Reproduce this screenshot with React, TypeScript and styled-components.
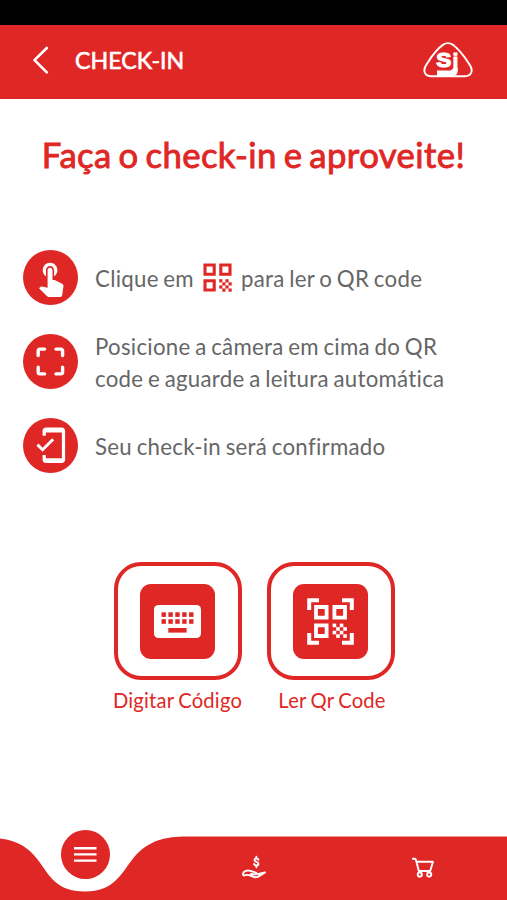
import React from "react";
import styled, { createGlobalStyle } from "styled-components";

const RED = "#df2726";

const GlobalStyle = createGlobalStyle`
  * { box-sizing: border-box; }
  body { margin: 0; background: #fff; font-family: Lato, sans-serif; font-variant-ligatures: none; }
  button { font: inherit; font-variant-ligatures: none; border: 0; padding: 0; background: none; cursor: pointer; }
  svg { display: block; flex: none; }
`;

const Screen = styled.div`
  width: 507px;
  height: 900px;
  display: flex;
  flex-direction: column;
  background: #fff;
  overflow: hidden;
`;

const StatusBar = styled.div`
  height: 25px;
  flex: none;
  background: #000;
`;

const Header = styled.header`
  height: 74px;
  flex: none;
  display: flex;
  align-items: center;
  padding: 0 34px 4px 32px;
  background: ${RED};
  color: #fff;
`;

const HeaderTitle = styled.h1`
  flex: 1;
  margin: 0 0 0 26px;
  font-size: 23.2px;
  line-height: 28px;
  font-weight: 400;
  -webkit-text-stroke: 0.6px currentColor;
`;

const Headline = styled.h2`
  margin: 33px 0 0;
  text-align: center;
  color: ${RED};
  font-size: 34.7px;
  line-height: 46px;
  font-weight: 400;
  letter-spacing: 0.4px;
  word-spacing: -2.4px;
  white-space: nowrap;
  -webkit-text-stroke: 0.9px currentColor;
`;

const Steps = styled.ol`
  list-style: none;
  margin: 72px 0 0;
  padding: 0 0 0 23px;
  display: flex;
  flex-direction: column;
  gap: 29px;
`;

const Step = styled.li`
  display: flex;
  align-items: center;
  gap: 17px;
  height: 55px;
`;

const StepBadge = styled.span`
  width: 55px;
  height: 55px;
  flex: none;
  border-radius: 50%;
  background: ${RED};
  color: #fff;
`;

const StepText = styled.span`
  display: flex;
  align-items: center;
  padding-top: 2px;
  color: #666;
  font-size: 22.25px;
  line-height: 32px;
  letter-spacing: 0.27px;
  word-spacing: -1.3px;
  white-space: nowrap;
`;

const InlineIcon = styled.span`
  margin: 0 9px 2px 9px;
`;

const Actions = styled.div`
  display: flex;
  justify-content: center;
  gap: 25px;
  margin-top: 89px;
  padding-left: 1px;
`;

const Action = styled.button`
  width: 128px;
  display: flex;
  flex-direction: column;
  align-items: center;
  color: ${RED};
  font-size: 20.2px;
  line-height: 26px;
  letter-spacing: 0.2px;
  word-spacing: -1px;
  white-space: nowrap;
`;

const ActionLabel = styled.span<{ $indent?: number }>`
  padding-left: ${(p) => p.$indent ?? 0}px;
`;

const ActionFrame = styled.span`
  width: 128px;
  height: 118px;
  margin-bottom: 7px;
  display: flex;
  align-items: center;
  justify-content: center;
  border: 4px solid ${RED};
  border-radius: 27px;
`;

const ActionTile = styled.span`
  width: 75px;
  height: 75px;
  display: flex;
  align-items: center;
  justify-content: center;
  border-radius: 11px;
  background: ${RED};
  color: #fff;
`;

const NavBar = styled.nav`
  position: relative;
  height: 72px;
  margin-top: auto;
  flex: none;
  display: grid;
  grid-template-columns: 170px 168px 169px;
`;

const NavShape = styled.svg`
  position: absolute;
  inset: 0;
`;

const NavItem = styled.button`
  position: relative;
  display: flex;
  align-items: center;
  justify-content: center;
  padding-top: 7px;
  color: #fff;
`;

const MenuItem = styled(NavItem)`
  align-items: flex-start;
  padding-top: 2px;
`;

const MenuBadge = styled.span`
  width: 49px;
  height: 49px;
  display: flex;
  align-items: center;
  justify-content: center;
  border-radius: 50%;
  background: ${RED};
`;

const BackIcon = () => (
  <svg width="17" height="28" viewBox="0 0 17 28" fill="none" stroke="#fff" strokeWidth="2.6" strokeLinecap="round" strokeLinejoin="round">
    <path d="M14.8 2 2.5 14.2 14.8 26.4" />
  </svg>
);

const Logo = () => (
  <svg width="50" height="38" viewBox="0 0 50 38">
    <path d="M20.2 3.6Q24.9.6 29.6 3.6Q37 9 45.8 22.4C52 30.6 47 35.2 42 35.2H8C2.8 35.2-1.8 30.6 4.2 22.4Q12.5 9 20.2 3.6Z" fill="none" stroke="#fff" strokeWidth="1.9" />
    <g fill="#fff" stroke="#fff" strokeWidth="1.2" fontFamily="Liberation Sans, sans-serif" fontWeight="700">
      <text x="13.2" y="26.2" fontSize="20.5" textLength="15" lengthAdjust="spacingAndGlyphs">S</text>
      <text x="29.8" y="27" fontSize="19.5">j</text>
    </g>
    <path d="M14 29.4H27.5Q30 29.4 30 27H34.8V29.5Q34.8 35.2 28.5 35.2H14Z" fill="#fff" />
  </svg>
);

const TouchIcon = () => (
  <svg width="55" height="55" viewBox="0 0 55 55" fill="currentColor">
    <path transform="translate(8.3 7.9) scale(1.63)" d="M9 11.24V7.5C9 6.12 10.12 5 11.5 5S14 6.12 14 7.5v3.74c1.21-.81 2-2.18 2-3.74C16 5.01 13.99 3 11.5 3S7 5.01 7 7.5c0 1.56.79 2.93 2 3.74zm9.84 4.63l-4.54-2.26c-.17-.07-.35-.11-.54-.11H13v-6c0-.83-.67-1.5-1.5-1.5S10 6.67 10 7.5v10.74l-3.43-.72c-.08-.01-.15-.03-.24-.03-.31 0-.59.13-.79.33l-.79.8 4.94 4.94c.27.27.65.44 1.06.44h6.79c.75 0 1.33-.55 1.44-1.28l.75-5.27c.01-.07.02-.14.02-.2 0-.62-.38-1.16-.91-1.38z" />
  </svg>
);

const FrameIcon = () => (
  <svg width="55" height="55" viewBox="0 0 55 55" fill="none" stroke="currentColor" strokeWidth="3.4" strokeLinecap="round">
    <path d="M15.2 21.5V17Q15.2 15.1 17.1 15.1H21.6M33 15.1H37.7Q39.6 15.1 39.6 17V21.5M39.6 33.2V38Q39.6 39.9 37.7 39.9H33M21.6 39.9H17.1Q15.2 39.9 15.2 38V33.2" />
  </svg>
);

const PhoneCheckIcon = () => (
  <svg width="55" height="55" viewBox="0 0 55 55" fill="currentColor">
    <path transform="translate(8.3 8) scale(1.61)" d="M19 1H9c-1.1 0-2 .9-2 2v3h2V4h10v16H9v-2H7v3c0 1.1.9 2 2 2h10c1.1 0 2-.9 2-2V3c0-1.1-.9-2-2-2zM7.01 13.47l-2.55-2.55-1.27 1.27L7 16l7.19-7.19-1.27-1.27-5.91 5.93z" />
  </svg>
);

const Checker = ({ at, cell, color }: { at: number; cell: number; color: string }) => (
  <g fill={color}>
    {[0, 1, 2, 3].flatMap((y) =>
      [0, 1, 2, 3]
        .filter((x) => (x + y) % 2 === 0)
        .map((x) => <rect key={`${x}-${y}`} x={at + x * cell} y={at + y * cell} width={cell + 0.1} height={cell + 0.1} />)
    )}
  </g>
);

const QrIcon = () => (
  <svg width="29" height="29" viewBox="0 0 29 29">
    <path fill="none" stroke={RED} strokeWidth="3.1" d="M2 2H11.2V11.2H2ZM17.8 2H27V11.2H17.8ZM2 17.8H11.2V27H2Z" />
    <Checker at={16.2} cell={3.1} color={RED} />
  </svg>
);

const KeyboardIcon = () => (
  <svg width="47" height="33" viewBox="0 0 47 33">
    <rect width="47" height="33" rx="4.5" fill="#fff" />
    <g fill={RED}>
      {[0, 1, 2, 3, 4].map((c) => (
        <React.Fragment key={c}>
          <rect x={7.5 + c * 6.9} y="7.3" width="4.4" height="4.6" />
          <rect x={7.5 + c * 6.9} y="14.2" width="4.4" height="4.6" />
        </React.Fragment>
      ))}
      <rect x="14.3" y="23" width="18.3" height="4.6" />
    </g>
  </svg>
);

const QrScanIcon = () => (
  <svg width="47" height="47" viewBox="0 0 47 47">
    <g fill="none" stroke="#fff">
      <path strokeWidth="4" d="M2.2 12V2.2H12M35 2.2H44.8V12M44.8 35V44.8H35M12 44.8H2.2V35" />
      <path strokeWidth="3.8" d="M9 9H19.6V19.6H9ZM27.4 9H38V19.6H27.4ZM9 27.4H19.6V38H9Z" />
    </g>
    <Checker at={25.6} cell={3.55} color="#fff" />
  </svg>
);

const MenuIcon = () => (
  <svg width="23" height="17" viewBox="0 0 23 17" fill="none" stroke="#fff" strokeWidth="2.4">
    <path d="M0 2.2H22.5M0 8.4H22.5M0 14.6H22.5" />
  </svg>
);

const HandMoneyIcon = () => (
  <svg width="26" height="26" viewBox="0 0 26 26" fill="none" stroke="#fff" strokeLinecap="round" strokeLinejoin="round">
    <path strokeWidth="1.9" d="M17.4 4.8C17 3 13.4 3 13.4 5C13.4 7.3 17.5 6.3 17.5 8.8C17.5 11 13.4 10.9 13.1 9M15.4 1.6V3.2M15.4 10.8V12.2" />
    <path strokeWidth="1.9" d="M2 19.6C1.6 16.2 6 14.9 9.4 15.9L14.8 17.6C16.4 18.3 15.6 19.6 14 19.4L10 19M16.4 19.2 24 17.4L17.2 21.6Q15.2 22.6 13.2 22L8 20.2Q6 19.5 4.2 20.2L2.8 20.6" />
  </svg>
);

const CartIcon = () => (
  <svg width="24" height="24" viewBox="0 0 24 24" fill="none" stroke="#fff" strokeWidth="1.9" strokeLinejoin="round" strokeLinecap="round">
    <path d="M1.8 2.8H3.6Q4.7 2.8 5 4L7.8 15H19.2L22 5.8H5.6" />
    <circle cx="8.8" cy="18.6" r="2.1" />
    <circle cx="18.2" cy="18.6" r="2.1" />
  </svg>
);

export default function App() {
  return (
    <>
      <GlobalStyle />
      <Screen>
        <StatusBar />
        <Header>
          <BackIcon />
          <HeaderTitle>CHECK-IN</HeaderTitle>
          <Logo />
        </Header>
        <Headline>Faça o check-in e aproveite!</Headline>
        <Steps>
          <Step>
            <StepBadge><TouchIcon /></StepBadge>
            <StepText>
              Clique em<InlineIcon><QrIcon /></InlineIcon>para ler o QR code
            </StepText>
          </Step>
          <Step>
            <StepBadge><FrameIcon /></StepBadge>
            <StepText>
              Posicione a câmera em cima do QR<br />code e aguarde a leitura automática
            </StepText>
          </Step>
          <Step>
            <StepBadge><PhoneCheckIcon /></StepBadge>
            <StepText>Seu check-in será confirmado</StepText>
          </Step>
        </Steps>
        <Actions>
          <Action>
            <ActionFrame><ActionTile><KeyboardIcon /></ActionTile></ActionFrame>
            <ActionLabel>Digitar Código</ActionLabel>
          </Action>
          <Action>
            <ActionFrame><ActionTile><QrScanIcon /></ActionTile></ActionFrame>
            <ActionLabel $indent={3}>Ler Qr Code</ActionLabel>
          </Action>
        </Actions>
        <NavBar>
          <NavShape width="507" height="72" viewBox="0 0 507 72">
            <path fill={RED} d="M0 10.5C18 13 28 19 38 32C50 48 56 63.5 85 63.5C114 63.5 121 46 133 30.5C148 12 166 8.5 187 8.5H507V72H0Z" />
          </NavShape>
          <MenuItem aria-label="Menu"><MenuBadge><MenuIcon /></MenuBadge></MenuItem>
          <NavItem aria-label="Cashback"><HandMoneyIcon /></NavItem>
          <NavItem aria-label="Carrinho"><CartIcon /></NavItem>
        </NavBar>
      </Screen>
    </>
  );
}
